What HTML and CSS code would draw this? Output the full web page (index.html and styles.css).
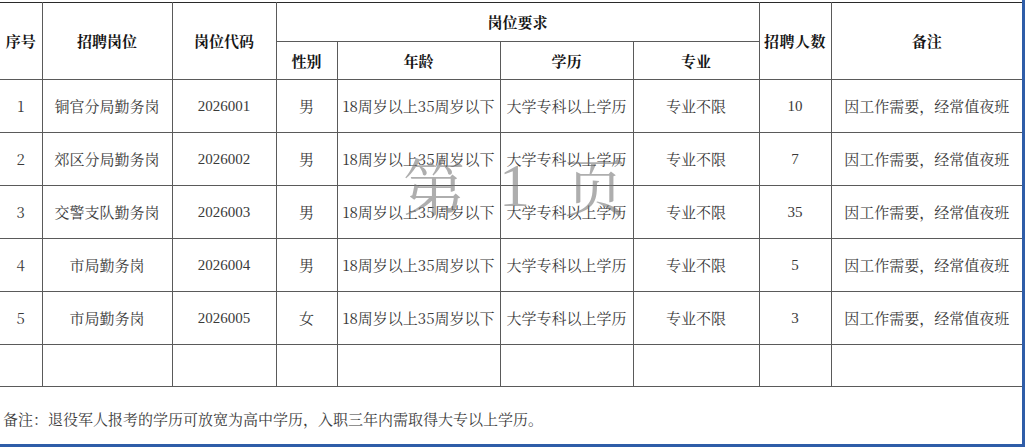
FILE: index.html
```html
<!DOCTYPE html>
<html lang="zh-CN">
<head>
<meta charset="utf-8">
<link rel="stylesheet" href="styles.css">
</head>
<body>
<div class="page">
  <table class="grid">
    <colgroup>
      <col class="c1"><col class="c2"><col class="c3"><col class="c4"><col class="c5"><col class="c6"><col class="c7"><col class="c8"><col class="c9">
    </colgroup>
    <thead>
      <tr class="h1">
        <th rowspan="2">序号</th>
        <th rowspan="2">招聘岗位</th>
        <th rowspan="2">岗位代码</th>
        <th colspan="4">岗位要求</th>
        <th rowspan="2" class="tight">招聘人数</th>
        <th rowspan="2" class="last">备注</th>
      </tr>
      <tr class="h2">
        <th>性别</th>
        <th>年龄</th>
        <th>学历</th>
        <th>专业</th>
      </tr>
    </thead>
    <tbody>
      <tr class="r"><td>1</td><td>铜官分局勤务岗</td><td class="num">2026001</td><td>男</td><td>18周岁以上35周岁以下</td><td>大学专科以上学历</td><td>专业不限</td><td class="num">10</td><td class="last">因工作需要，经常值夜班</td></tr>
      <tr class="r"><td>2</td><td>郊区分局勤务岗</td><td class="num">2026002</td><td>男</td><td>18周岁以上35周岁以下</td><td>大学专科以上学历</td><td>专业不限</td><td class="num">7</td><td class="last">因工作需要，经常值夜班</td></tr>
      <tr class="r"><td>3</td><td>交警支队勤务岗</td><td class="num">2026003</td><td>男</td><td>18周岁以上35周岁以下</td><td>大学专科以上学历</td><td>专业不限</td><td class="num">35</td><td class="last">因工作需要，经常值夜班</td></tr>
      <tr class="r"><td>4</td><td>市局勤务岗</td><td class="num">2026004</td><td>男</td><td>18周岁以上35周岁以下</td><td>大学专科以上学历</td><td>专业不限</td><td class="num">5</td><td class="last">因工作需要，经常值夜班</td></tr>
      <tr class="r"><td>5</td><td>市局勤务岗</td><td class="num">2026005</td><td>女</td><td>18周岁以上35周岁以下</td><td>大学专科以上学历</td><td>专业不限</td><td class="num">3</td><td class="last">因工作需要，经常值夜班</td></tr>
      <tr class="empty"><td></td><td></td><td></td><td></td><td></td><td></td><td></td><td></td><td class="last"></td></tr>
    </tbody>
  </table>
  <p class="note">备注：退役军人报考的学历可放宽为高中学历，入职三年内需取得大专以上学历。</p>
  <div class="watermark"><span>第</span><span class="one">1</span><span>页</span></div>
</div>
</body>
</html>
```

FILE: styles.css
```css
html, body {
  margin: 0;
  padding: 0;
  background: #fff;
}
.page {
  position: relative;
  box-sizing: border-box;
  width: 1025px;
  height: 447px;
  padding-top: 2px;
  border-right: 3px solid #2f5da8;
  border-bottom: 3px solid #2f5da8;
  overflow: hidden;
  font-family: "Noto Serif CJK SC", "Liberation Serif", "Noto Sans CJK SC", serif;
}
.grid {
  border-collapse: collapse;
  table-layout: fixed;
  width: 1022px;
}
.c1 { width: 42px; }
.c2 { width: 130px; }
.c3 { width: 104px; }
.c4 { width: 61px; }
.c5 { width: 163px; }
.c6 { width: 133px; }
.c7 { width: 126px; }
.c8 { width: 72px; }
.c9 { width: 191px; }
.grid th, .grid td {
  border: 1px solid #5a5a5a;
  padding: 0;
  text-align: center;
  vertical-align: middle;
  font-size: 15px;
  line-height: 18px;
  white-space: nowrap;
}
.grid th {
  font-weight: 700;
  color: #151515;
}
.grid tr > :first-child { border-left: none; }
.grid .last { border-right: none; }
.grid thead tr:first-child th { border-top: 1px solid #2a2a2a; }
.grid .h1 { height: 39px; }
.grid .h2 { height: 38px; }
.grid .r { height: 53px; }
.grid .empty { height: 42px; }
.grid td {
  color: #3a3a3a;
  font-weight: 400;
}
.grid .num {
  font-family: "Liberation Serif", serif;
}
.grid .tight { letter-spacing: 0.5px; }
.note {
  margin: 23px 0 0 3px;
  font-size: 15px;
  line-height: 18px;
  color: #3a3a3a;
}
.watermark {
  position: absolute;
  left: 403px;
  top: 152px;
  display: flex;
  gap: 34px;
  font-family: "Noto Serif CJK SC", "Liberation Serif", "Noto Sans CJK SC", serif;
  font-size: 62px;
  line-height: 66px;
  color: rgba(120, 120, 120, 0.6);
  pointer-events: none;
}
.watermark .one {
  font-family: "Liberation Serif", serif;
  font-weight: 400;
}
```
